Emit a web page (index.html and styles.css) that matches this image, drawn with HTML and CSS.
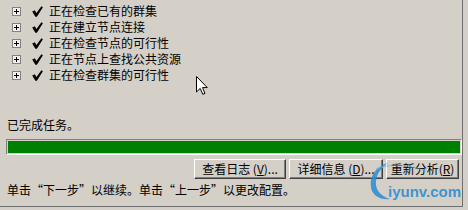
FILE: index.html
```html
<!DOCTYPE html>
<html lang="zh">
<head>
<meta charset="utf-8">
<link rel="stylesheet" href="styles.css">
</head>
<body>
<div class="frame">
  <ul class="tree">
    <li class="row"><span class="plus"></span><svg class="check" viewBox="0 0 11 11"><path d="M0.2 5.6 L2.8 4.3 L4.4 6.9 L9.4 0.2 L10.9 1.3 L4.9 10.8 L3.4 10.8 Z"/></svg><span class="label">正在检查已有的群集</span></li>
    <li class="row"><span class="plus"></span><svg class="check" viewBox="0 0 11 11"><path d="M0.2 5.6 L2.8 4.3 L4.4 6.9 L9.4 0.2 L10.9 1.3 L4.9 10.8 L3.4 10.8 Z"/></svg><span class="label">正在建立节点连接</span></li>
    <li class="row"><span class="plus"></span><svg class="check" viewBox="0 0 11 11"><path d="M0.2 5.6 L2.8 4.3 L4.4 6.9 L9.4 0.2 L10.9 1.3 L4.9 10.8 L3.4 10.8 Z"/></svg><span class="label">正在检查节点的可行性</span></li>
    <li class="row"><span class="plus"></span><svg class="check" viewBox="0 0 11 11"><path d="M0.2 5.6 L2.8 4.3 L4.4 6.9 L9.4 0.2 L10.9 1.3 L4.9 10.8 L3.4 10.8 Z"/></svg><span class="label">正在节点上查找公共资源</span></li>
    <li class="row"><span class="plus"></span><svg class="check" viewBox="0 0 11 11"><path d="M0.2 5.6 L2.8 4.3 L4.4 6.9 L9.4 0.2 L10.9 1.3 L4.9 10.8 L3.4 10.8 Z"/></svg><span class="label">正在检查群集的可行性</span></li>
  </ul>
  <p class="status">已完成任务。</p>
  <div class="progress"><div class="fill" style="width:100%"></div></div>
  <div class="buttons">
    <button class="btn w-log">查看日志 (<u>V</u>)...</button>
    <button class="btn w-detail">详细信息 (<u>D</u>)...</button>
    <button class="btn w-re">重新分析(<u>R</u>)</button>
  </div>
  <p class="hint">单击“下一步”以继续。单击“上一步”以更改配置。</p>

  <svg class="cursor" viewBox="0 0 12 19"><path d="M0.5 0.5 L0.5 16 L4.2 12.4 L6.8 18.3 L9 17.4 L6.5 11.6 L11.3 11.6 Z"/></svg>
  <div class="watermark">
    <svg class="wm-logo" viewBox="0 0 30 40"><path d="M22 2 C8 6 2 18 6 30 C9 36 16 39 24 38 C14 35 9 28 10 20 C11 12 16 6 22 2 Z"/><path class="wm-swoosh" d="M10 8 C25 2 45 4 60 10"/></svg>
    <span class="wm-text">iyunv.com</span>
  </div>
</div>
</body>
</html>
```

FILE: styles.css
```css
html, body {
  margin: 0;
  padding: 0;
  background: #d4d0c8;
}
body {
  width: 468px;
  height: 210px;
  overflow: hidden;
  font-family: "Noto Sans CJK SC", "Noto Sans", sans-serif;
  font-size: 12px;
  color: #000;
}
.frame {
  position: relative;
  width: 462px;
  height: 206px;
  border-right: 1px solid #6f6f6f;
  border-bottom: 1px solid #6f6f6f;
  display: flex;
  flex-direction: column;
}
.tree {
  list-style: none;
  margin: 0;
  padding: 3px 0 0 12px;
}
.row {
  height: 16px;
  display: flex;
  align-items: center;
}
.plus {
  position: relative;
  width: 7px;
  height: 7px;
  border: 1px solid #808080;
  background: #f2f1ee;
  flex: none;
}
.plus::before, .plus::after {
  content: "";
  position: absolute;
  background: #000;
}
.plus::before { left: 1px; top: 3px; width: 5px; height: 1px; }
.plus::after { left: 3px; top: 1px; width: 1px; height: 5px; }
.check {
  width: 11px;
  height: 11px;
  margin-left: 11px;
  flex: none;
}
.check path { fill: #000; }
.label {
  margin-left: 6px;
  line-height: 16px;
  white-space: nowrap;
}
.status {
  margin: 34px 0 0 7px;
  line-height: 16px;
}
.progress {
  margin: 6px 0 0 6px;
  width: 452px;
  height: 12px;
  border: 1px solid;
  border-color: #808080 #fff #fff #808080;
  padding: 1px;
}
.fill {
  height: 100%;
  background: #008000;
}
.buttons {
  display: flex;
  justify-content: flex-end;
  gap: 3px;
  margin-top: 4px;
  padding-right: 3px;
}
.btn {
  height: 20px;
  padding: 0;
  font: inherit;
  font-size: 12px;
  line-height: 16px;
  color: #000;
  background: #d4d0c8;
  border: 1px solid;
  border-color: #fff #404040 #404040 #fff;
  box-shadow: inset -1px -1px 0 #808080;
  white-space: nowrap;
}
.btn u { text-decoration: underline; }
.w-log { width: 92px; }
.w-detail { width: 94px; }
.w-re { width: 73px; }
.hint {
  margin: 3px 0 0 7px;
  line-height: 16px;
  white-space: nowrap;
}
.cursor {
  position: absolute;
  left: 196px;
  top: 76px;
  width: 12px;
  height: 19px;
}
.cursor path {
  fill: #fff;
  stroke: #000;
  stroke-width: 1;
}
.watermark {
  position: absolute;
  left: 366px;
  top: 161px;
  width: 96px;
  height: 42px;
  pointer-events: none;
}
.wm-logo {
  position: absolute;
  left: 0;
  top: 0;
  width: 30px;
  height: 40px;
  overflow: visible;
}
.wm-logo path { fill: rgba(40, 140, 210, 0.85); }
.wm-logo .wm-swoosh {
  fill: none;
  stroke: rgba(120, 180, 230, 0.5);
  stroke-width: 1.5;
}
.wm-text {
  position: absolute;
  left: 22px;
  top: 22px;
  font-family: "Liberation Sans", Arial, sans-serif;
  font-weight: bold;
  font-size: 15px;
  line-height: 18px;
  color: rgba(40, 140, 210, 0.9);
  white-space: nowrap;
}
```
